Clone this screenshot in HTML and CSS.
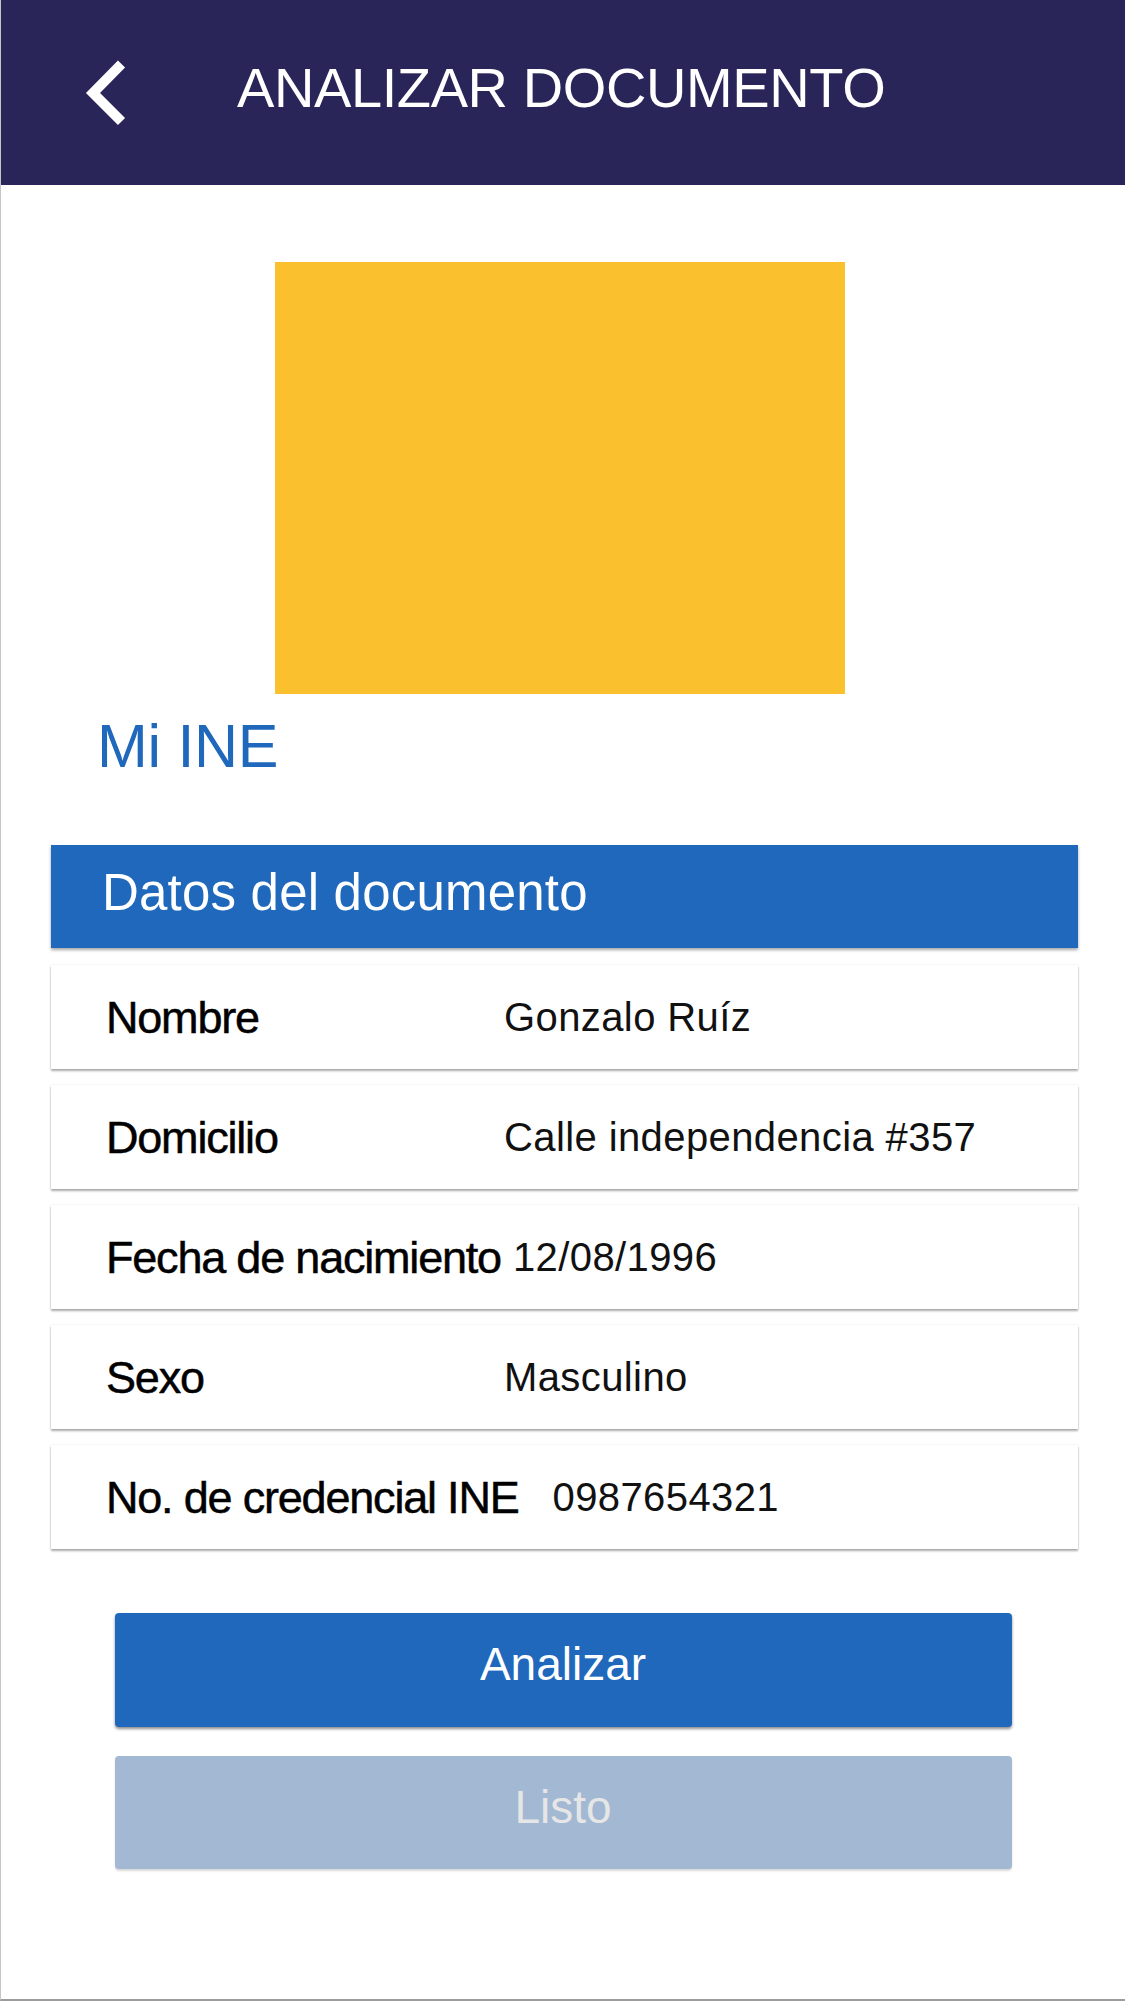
FILE: index.html
```html
<!DOCTYPE html>
<html lang="es">
<head>
<meta charset="utf-8">
<title>Analizar documento</title>
<link rel="stylesheet" href="styles.css">
</head>
<body>
<div class="screen">
  <header class="topbar">
    <svg class="back" width="50" height="80" viewBox="0 0 50 80" aria-hidden="true">
      <polyline points="41.5,11 13,40 41.5,68.5" fill="none" stroke="#ffffff" stroke-width="10" stroke-linecap="butt" stroke-linejoin="miter"/>
    </svg>
    <h1 class="topbar-title">ANALIZAR DOCUMENTO</h1>
  </header>

  <main class="content">
    <div class="photo"></div>
    <h2 class="doc-title">Mi INE</h2>

    <section class="data">
      <div class="data-head">Datos del documento</div>
      <div class="rows">
        <div class="row"><span class="label">Nombre</span><span class="value">Gonzalo Ruíz</span></div>
        <div class="row"><span class="label">Domicilio</span><span class="value">Calle independencia #357</span></div>
        <div class="row"><span class="label">Fecha de nacimiento</span><span class="value">12/08/1996</span></div>
        <div class="row"><span class="label">Sexo</span><span class="value">Masculino</span></div>
        <div class="row"><span class="label">No. de credencial INE</span><span class="value value-spaced">0987654321</span></div>
      </div>
    </section>

    <div class="actions">
      <button class="btn btn-primary" type="button">Analizar</button>
      <button class="btn btn-disabled" type="button">Listo</button>
    </div>
  </main>
</div>
</body>
</html>
```

FILE: styles.css
```css
html, body {
  margin: 0;
  padding: 0;
  background: #ffffff;
}

body {
  width: 1125px;
  height: 2001px;
  overflow: hidden;
  font-family: "Liberation Sans", Arial, sans-serif;
}

.screen {
  box-sizing: border-box;
  width: 1125px;
  height: 2001px;
  border-left: 1px solid #c6c6c6;
  border-bottom: 2px solid #9c9c9c;
  background: #ffffff;
  display: flex;
  flex-direction: column;
}

.topbar {
  box-sizing: border-box;
  height: 185px;
  background: #2a2559;
  display: flex;
  align-items: flex-start;
  padding-top: 53px;
  flex-shrink: 0;
}

.back {
  display: block;
  margin-left: 79px;
  flex-shrink: 0;
}

.topbar-title {
  margin: 7px 0 0 107px;
  font-weight: 400;
  font-size: 56px;
  line-height: 56px;
  color: #ffffff;
  letter-spacing: -0.4px;
  white-space: nowrap;
}

.content {
  display: flex;
  flex-direction: column;
}

.photo {
  width: 570px;
  height: 432px;
  margin: 77px 0 0 274px;
  background: #fbc02d;
}

.doc-title {
  margin: 22px 0 0 96px;
  font-weight: 400;
  font-size: 61px;
  line-height: 61px;
  color: #1f68bc;
  letter-spacing: -0.3px;
}

.data {
  width: 1027px;
  margin: 68px 0 0 50px;
}

.data-head {
  box-sizing: border-box;
  height: 103px;
  background: #1f68bc;
  color: #ffffff;
  display: flex;
  align-items: center;
  padding: 0 0 8px 51px;
  font-size: 51px;
  line-height: 51px;
  letter-spacing: 0.2px;
  box-shadow: 0 2px 3px rgba(0, 0, 0, 0.35);
}

.rows {
  margin-top: 17px;
  display: flex;
  flex-direction: column;
  gap: 16px;
}

.row {
  box-sizing: border-box;
  height: 104px;
  background: #ffffff;
  display: flex;
  align-items: center;
  padding-left: 55px;
  box-shadow: 0 2px 2px rgba(0, 0, 0, 0.32), 0 0 2px rgba(0, 0, 0, 0.1);
}

.label {
  box-sizing: border-box;
  min-width: 398px;
  padding-right: 12px;
  font-size: 45px;
  line-height: 45px;
  letter-spacing: -1.2px;
  color: #000000;
  -webkit-text-stroke: 0.5px #000000;
  white-space: nowrap;
}

.value {
  font-size: 40px;
  line-height: 40px;
  letter-spacing: 0.4px;
  color: #111111;
  white-space: nowrap;
}

.value-spaced {
  margin-left: 22px;
}

.actions {
  margin-top: 64px;
  display: flex;
  flex-direction: column;
  align-items: center;
}

.btn {
  box-sizing: border-box;
  width: 897px;
  height: 114px;
  border: none;
  border-radius: 4px;
  padding: 0 0 12px 0;
  display: flex;
  align-items: center;
  justify-content: center;
  font-family: "Liberation Sans", Arial, sans-serif;
  font-size: 46px;
  line-height: 46px;
}

.btn-primary {
  background: #1f68bc;
  color: #ffffff;
  box-shadow: 0 2px 3px rgba(0, 0, 0, 0.45);
}

.btn-disabled {
  margin-top: 29px;
  height: 113px;
  background: #a2b8d3;
  color: #e6e6e6;
  box-shadow: 0 2px 2px rgba(0, 0, 0, 0.15);
}
```
